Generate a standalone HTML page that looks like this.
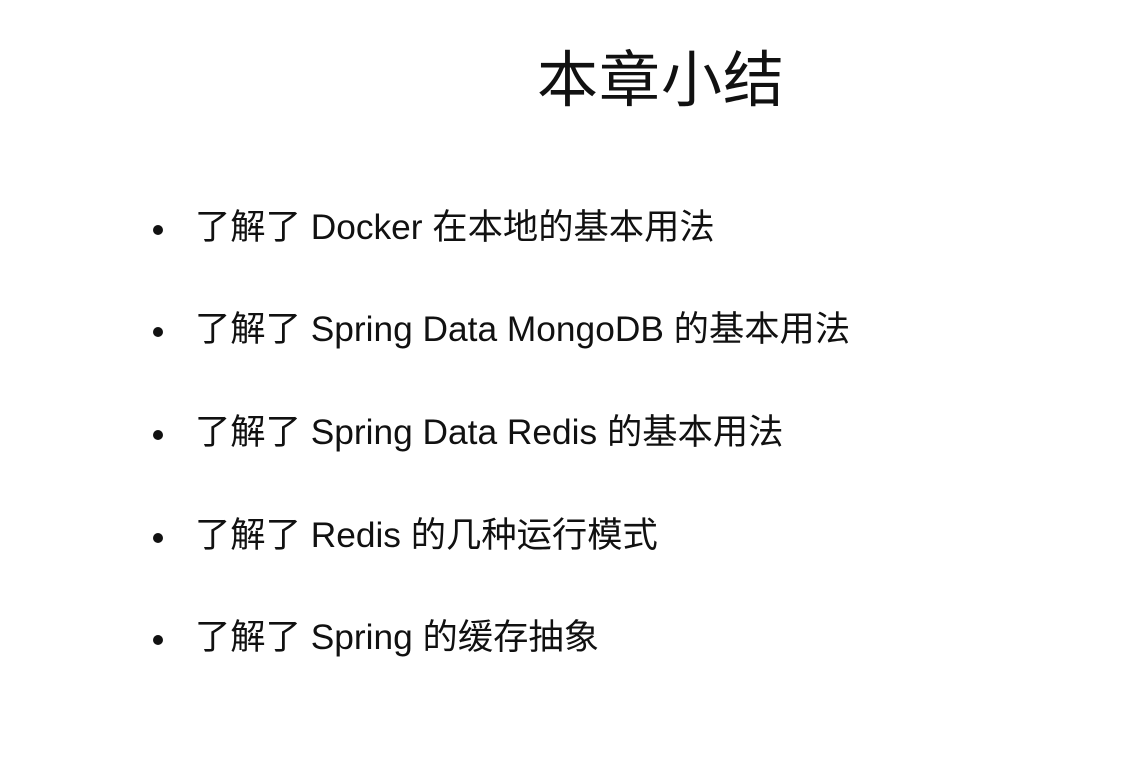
<!DOCTYPE html>
<html><head><meta charset="utf-8"><style>
html,body{margin:0;padding:0;background:#fff;width:1137px;height:780px;overflow:hidden}
body{font-family:"Liberation Sans","Noto Sans CJK SC",sans-serif;color:#111;position:relative}
h1{position:absolute;left:537px;top:40px;margin:0;font-weight:400;font-size:61px;line-height:80px;letter-spacing:1px}
.li{position:absolute;left:195px;font-size:35.3px;line-height:40px;white-space:nowrap}
.li:before{content:"";position:absolute;left:-42px;top:17px;width:10px;height:10px;border-radius:50%;background:#111}
</style></head><body>
<h1>本章小结</h1>
<div class="li" style="top:208px">了解了 Docker 在本地的基本用法</div>
<div class="li" style="top:310px">了解了 Spring Data MongoDB 的基本用法</div>
<div class="li" style="top:413px">了解了 Spring Data Redis 的基本用法</div>
<div class="li" style="top:516px">了解了 Redis 的几种运行模式</div>
<div class="li" style="top:618px">了解了 Spring 的缓存抽象</div>
</body></html>
